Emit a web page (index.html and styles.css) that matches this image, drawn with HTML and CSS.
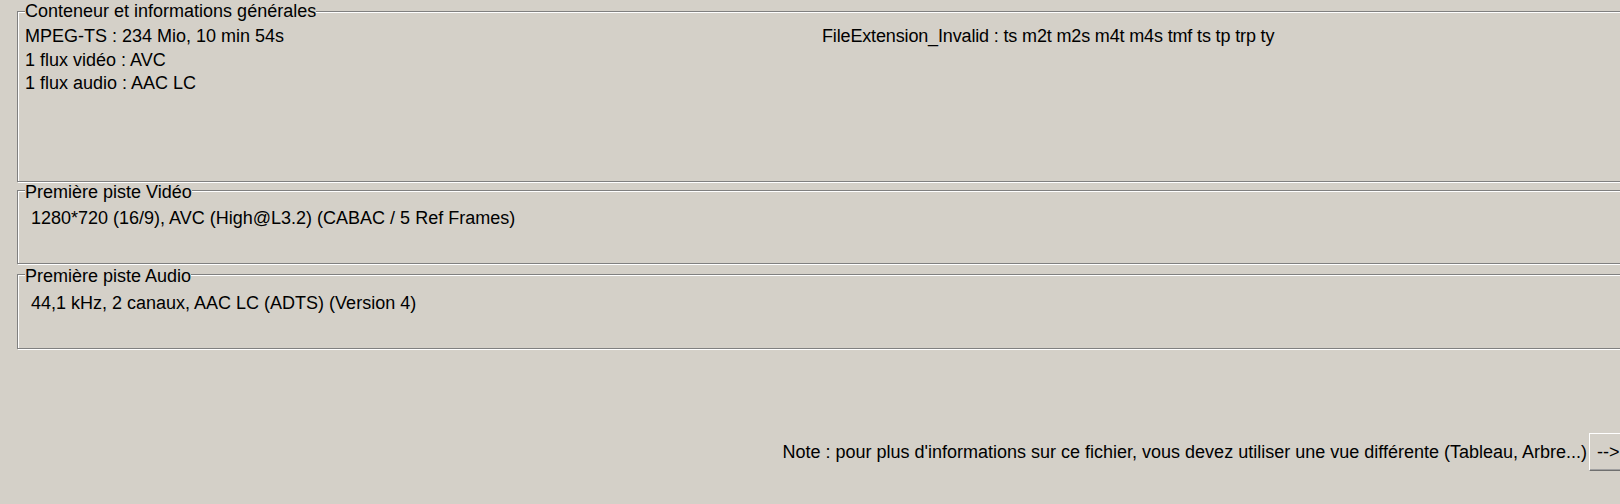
FILE: index.html
```html
<!DOCTYPE html>
<html lang="fr">
<head>
<meta charset="utf-8">
<title>MediaInfo</title>
<link rel="stylesheet" href="styles.css">
</head>
<body>
<div class="page">
  <fieldset class="group group-general">
    <legend class="group-title">Conteneur et informations générales</legend>
    <div class="general-grid">
      <div class="general-col">
        <div class="line">MPEG-TS : 234 Mio, 10 min 54s</div>
        <div class="line">1 flux vidéo : AVC</div>
        <div class="line">1 flux audio : AAC LC</div>
      </div>
      <div class="general-col">
        <div class="line ext-line">FileExtension_Invalid : ts m2t m2s m4t m4s tmf ts tp trp ty</div>
      </div>
    </div>
  </fieldset>
  <fieldset class="group group-track group-video">
    <legend class="group-title track-title">Première piste Vidéo</legend>
    <div class="track-text">1280*720 (16/9), AVC (High@L3.2) (CABAC / 5 Ref Frames)</div>
  </fieldset>
  <fieldset class="group group-track group-audio">
    <legend class="group-title track-title">Première piste Audio</legend>
    <div class="track-text">44,1 kHz, 2 canaux, AAC LC (ADTS) (Version 4)</div>
  </fieldset>
  <div class="note-row">
    <span class="note-text">Note : pour plus d'informations sur ce fichier, vous devez utiliser une vue différente (Tableau, Arbre...)</span>
    <button class="note-button" type="button">--&gt;</button>
  </div>
</div>
</body>
</html>
```
FILE: styles.css
```css
html, body {
  margin: 0;
  padding: 0;
  background: #d4d0c8;
  overflow: hidden;
}
body {
  width: 1620px;
  height: 504px;
  font-family: "Liberation Sans", Arial, sans-serif;
  font-size: 18px;
  color: #000;
}
.page {
  width: 1642px;
  padding-left: 17px;
  display: flex;
  flex-direction: column;
}
.group {
  margin: 0;
  padding: 0 0 0 7px;
  border: 1px solid #808080;
  box-shadow: inset 1px 1px 0 #fff, 1px 1px 0 #fff;
  box-sizing: border-box;
  min-inline-size: 0;
}
.group-title {
  padding: 0;
  line-height: 17px;
  background: #d4d0c8;
  white-space: nowrap;
}
.track-title {
  position: relative;
  top: 2px;
}
.group-general {
  margin-top: 3px;
  height: 179px;
  padding-top: 5px;
}
.general-grid {
  display: grid;
  grid-template-columns: 797px 1fr;
}
.line {
  line-height: 23.5px;
  white-space: nowrap;
}
.ext-line {
  letter-spacing: -0.15px;
}
.group-track {
  height: 82px;
  padding-top: 8px;
}
.group-audio {
  margin-top: 2px;
  height: 83px;
  padding-top: 9px;
}
.track-text {
  padding-left: 6px;
  line-height: 23.5px;
  white-space: nowrap;
}
.note-row {
  margin-top: 84px;
  display: flex;
  justify-content: flex-end;
  align-items: center;
  gap: 2px;
}
.note-text {
  white-space: nowrap;
}
.note-button {
  width: 70px;
  height: 38px;
  padding: 0 0 0 7px;
  text-align: left;
  font: inherit;
  color: #000;
  background: #d4d0c8;
  border-style: solid;
  border-width: 1px;
  border-color: #fff #6f6f6f #6f6f6f #fff;
  box-shadow: inset -1px -1px 0 #a0a0a0;
}
```
